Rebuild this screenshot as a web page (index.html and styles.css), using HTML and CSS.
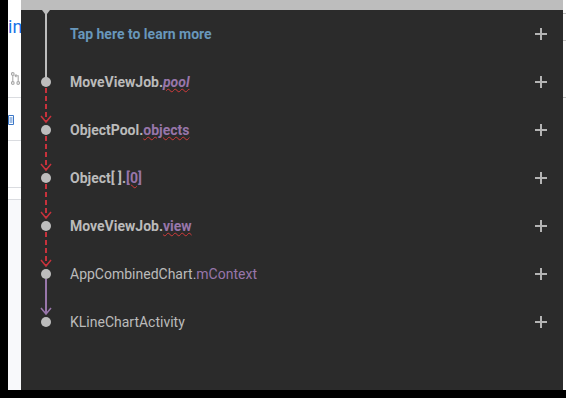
FILE: index.html
```html
<!DOCTYPE html>
<html lang="en">
<head>
    <meta charset="UTF-8">
    <title>Leak Trace</title>
    <link rel="stylesheet" href="styles.css">
</head>
<body>
    <div class="screen">
        <div class="main">
            <div class="edge"></div>

            <!-- page peeking out behind the panel -->
            <div class="side">
                <div class="side-top">
                    <span class="side-link">in</span>
                    <svg class="side-icon" viewBox="0 0 10 16" fill="none" stroke="#a8a8a8" stroke-width="1.2">
                        <circle cx="2" cy="3" r="1.5" />
                        <circle cx="2" cy="13" r="1.5" />
                        <circle cx="8" cy="13" r="1.5" />
                        <path d="M2 4.5v7M8 11.5V5H5M6 3.5L4.5 5 6 6.5" />
                    </svg>
                </div>
                <div class="side-row">
                    <svg class="side-doc" viewBox="0 0 6 10" fill="none" stroke="#3c78c8" stroke-width="1">
                        <path d="M0.5 0.5h5v9h-5zM1.5 3h3M1.5 5h3M1.5 7h3" />
                    </svg>
                </div>
                <div class="side-row side-empty"></div>
                <div class="side-row side-thin"></div>
                <div class="side-rest"></div>
            </div>

            <div class="panel">
                <div class="panel-bar"></div>
                <div class="trace">
                    <svg class="trace-line" viewBox="0 0 49 336" width="49" height="336">
                        <polygon points="21,0 29,0 26,4 24,4" fill="#bdbdbd" />
                        <line x1="25" y1="0" x2="25" y2="72" stroke="#bdbdbd" stroke-width="2" />
                        <g stroke="#c8323c" stroke-width="2" fill="none">
                            <line x1="25" y1="78" x2="25" y2="112" stroke-dasharray="5 3" />
                            <polyline points="20,106 25,112 30,106" stroke-width="1.5" />
                            <line x1="25" y1="126" x2="25" y2="160" stroke-dasharray="5 3" />
                            <polyline points="20,154 25,160 30,154" stroke-width="1.5" />
                            <line x1="25" y1="174" x2="25" y2="208" stroke-dasharray="5 3" />
                            <polyline points="20,202 25,208 30,202" stroke-width="1.5" />
                            <line x1="25" y1="222" x2="25" y2="256" stroke-dasharray="5 3" />
                            <polyline points="20,250 25,256 30,250" stroke-width="1.5" />
                        </g>
                        <g stroke="#9876aa" stroke-width="2" fill="none">
                            <line x1="25" y1="269" x2="25" y2="304" />
                            <polyline points="20,298 25,304 30,298" stroke-width="1.5" />
                        </g>
                        <g fill="#bdbdbd">
                            <circle cx="25" cy="72" r="5" />
                            <circle cx="25" cy="120" r="5" />
                            <circle cx="25" cy="168" r="5" />
                            <circle cx="25" cy="216" r="5" />
                            <circle cx="25" cy="264" r="5" />
                            <circle cx="25" cy="312" r="5" />
                        </g>
                    </svg>

                    <div class="row row-head">
                        <span class="label learn">Tap here to learn more</span>
                        <svg class="plus" viewBox="0 0 12 12"><path d="M6 0v12M0 6h12" /></svg>
                    </div>
                    <div class="row">
                        <span class="label strong">MoveViewJob.<em class="field leak">pool</em></span>
                        <svg class="plus" viewBox="0 0 12 12"><path d="M6 0v12M0 6h12" /></svg>
                    </div>
                    <div class="row">
                        <span class="label strong">ObjectPool.<span class="field leak">objects</span></span>
                        <svg class="plus" viewBox="0 0 12 12"><path d="M6 0v12M0 6h12" /></svg>
                    </div>
                    <div class="row">
                        <span class="label strong">Object[ ].<span class="field leak">[0]</span></span>
                        <svg class="plus" viewBox="0 0 12 12"><path d="M6 0v12M0 6h12" /></svg>
                    </div>
                    <div class="row">
                        <span class="label strong">MoveViewJob.<span class="field leak">view</span></span>
                        <svg class="plus" viewBox="0 0 12 12"><path d="M6 0v12M0 6h12" /></svg>
                    </div>
                    <div class="row">
                        <span class="label">AppCombinedChart.<span class="field">mContext</span></span>
                        <svg class="plus" viewBox="0 0 12 12"><path d="M6 0v12M0 6h12" /></svg>
                    </div>
                    <div class="row">
                        <span class="label">KLineChartActivity</span>
                        <svg class="plus" viewBox="0 0 12 12"><path d="M6 0v12M0 6h12" /></svg>
                    </div>
                </div>
            </div>

            <div class="rside">
                <div class="rside-cell rside-a"></div>
                <div class="rside-cell rside-b"></div>
                <div class="rside-cell rside-c"></div>
            </div>
        </div>
        <div class="footer"></div>
    </div>
</body>
</html>
```

FILE: styles.css
```css
:root {
    --clr-panel: #2b2b2b;
    --clr-bar: #bdbdbd;
    --clr-text: #bbbbbb;
    --clr-field: #9876aa;
    --clr-learn: #6897bb;
    --clr-leak: #d03a3a;
    --clr-plus: #b4b4b4;
    --clr-rule: #dadce0;
}

* {
    margin: 0;
    padding: 0;
    box-sizing: border-box;
}

body {
    background: #000;
    font-family: Roboto, 'Noto Sans', sans-serif;
    width: 566px;
    height: 398px;
    overflow: hidden;
}

.screen {
    display: flex;
    flex-direction: column;
    height: 398px;
}

.main {
    display: flex;
    height: 390px;
}

.edge {
    width: 8px;
    background: #000;
}

.footer {
    height: 8px;
    background: #000;
}

/* left strip */
.side {
    width: 13px;
    display: flex;
    flex-direction: column;
    background: #fff;
    overflow: hidden;
}

.side-top {
    height: 98px;
    border-bottom: 1px solid var(--clr-rule);
    display: flex;
    flex-direction: column;
    padding-top: 17px;
}

.side-link {
    font-size: 18px;
    line-height: 20px;
    color: #1a73e8;
    white-space: nowrap;
}

.side-icon {
    width: 9px;
    height: 15px;
    margin: 34px 0 0 3px;
}

.side-row {
    height: 37px;
    border-bottom: 1px solid var(--clr-rule);
    display: flex;
    align-items: center;
}

.side-row:nth-child(2) {
    border-top: 11px solid #fff;
    height: 43px;
    align-items: flex-end;
    padding-bottom: 15px;
}

.side-doc {
    width: 6px;
    height: 10px;
}

.side-empty {
    height: 47px;
}

.side-thin {
    height: 12px;
}

.side-rest {
    flex: 1;
    background: #f8f9fb;
}

/* panel */
.panel {
    flex: 1;
    background: var(--clr-panel);
    display: flex;
    flex-direction: column;
}

.panel-bar {
    height: 10px;
    background: var(--clr-bar);
}

.trace {
    display: grid;
    grid-template-columns: 49px 1fr;
    grid-auto-rows: 48px;
}

.trace-line {
    grid-column: 1;
    grid-row: 1 / span 7;
}

.row {
    grid-column: 2;
    display: flex;
    align-items: center;
    justify-content: space-between;
    padding-right: 16px;
}

.label {
    font-size: 14px;
    color: var(--clr-text);
    white-space: nowrap;
}

.learn {
    color: var(--clr-learn);
    font-weight: 700;
}

.strong {
    font-weight: 700;
}

.field {
    color: var(--clr-field);
    font-style: normal;
}

em.field {
    font-style: italic;
}

.leak {
    text-decoration: underline wavy var(--clr-leak);
    text-decoration-thickness: 1px;
    text-underline-offset: 1px;
}

.plus {
    width: 12px;
    height: 12px;
    stroke: var(--clr-plus);
    stroke-width: 2;
}

/* right strip */
.rside {
    width: 3px;
    background: #fff;
    display: flex;
    flex-direction: column;
}

.rside-a {
    height: 14px;
    border-bottom: 1px solid #c8c8c8;
}

.rside-b {
    height: 27px;
    border-bottom: 1px solid #d0d0d0;
}

.rside-c {
    height: 57px;
    border-bottom: 1px solid #d0d0d0;
}
```
